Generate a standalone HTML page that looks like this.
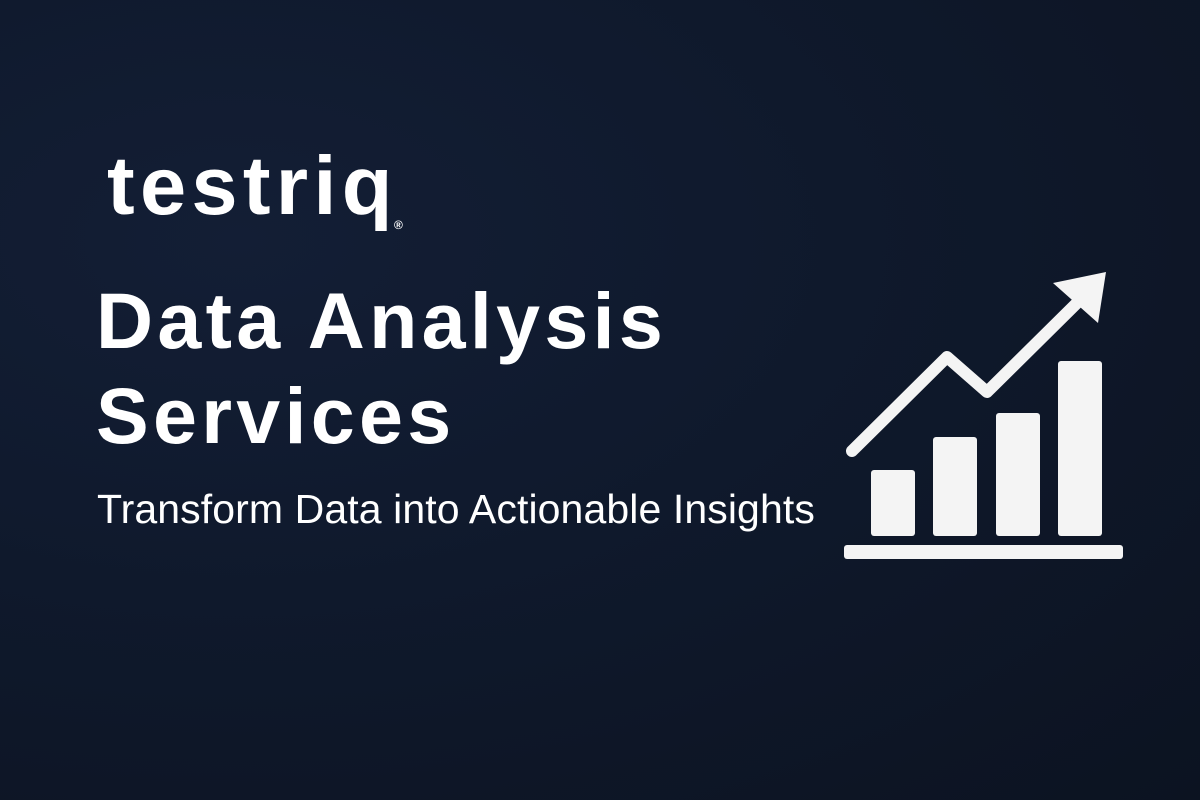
<!DOCTYPE html>
<html><head><style>
html,body{margin:0;padding:0}
body{width:1200px;height:800px;overflow:hidden;position:relative;
background:radial-gradient(ellipse at 20% 30%,#131e35 0%,#0f192c 45%,#0c1321 100%);
font-family:"Liberation Sans",sans-serif;color:#fff}
.t{position:absolute;white-space:nowrap;line-height:1}
</style></head><body>
<div class="t" style="left:107px;top:144px;font-size:83px;font-weight:bold;letter-spacing:5.3px">testriq</div>
<div class="t" style="left:394px;top:219px;font-size:12px;font-weight:bold">®</div>
<div class="t" style="left:96px;top:281px;font-size:79px;font-weight:bold;letter-spacing:4.3px">Data Analysis</div>
<div class="t" style="left:96px;top:376px;font-size:79px;font-weight:bold;letter-spacing:4.3px">Services</div>
<div class="t" style="left:97px;top:489px;font-size:41px;letter-spacing:0.1px">Transform Data into Actionable Insights</div>
<svg style="position:absolute;left:0;top:0" width="1200" height="800">
<g fill="#f4f4f4">
<rect x="871" y="470" width="44" height="66" rx="3"/>
<rect x="933" y="437" width="44" height="99" rx="3"/>
<rect x="996" y="413" width="44" height="123" rx="3"/>
<rect x="1058" y="361" width="44" height="175" rx="3"/>
<rect x="844" y="545" width="279" height="14" rx="3"/>
<polygon points="1106,272 1053,283 1098,323"/>
</g>
<polyline points="852,451 947,357 987,392 1080,300" fill="none" stroke="#f4f4f4" stroke-width="12" stroke-linecap="round" stroke-linejoin="round"/>
</svg>
</body></html>
